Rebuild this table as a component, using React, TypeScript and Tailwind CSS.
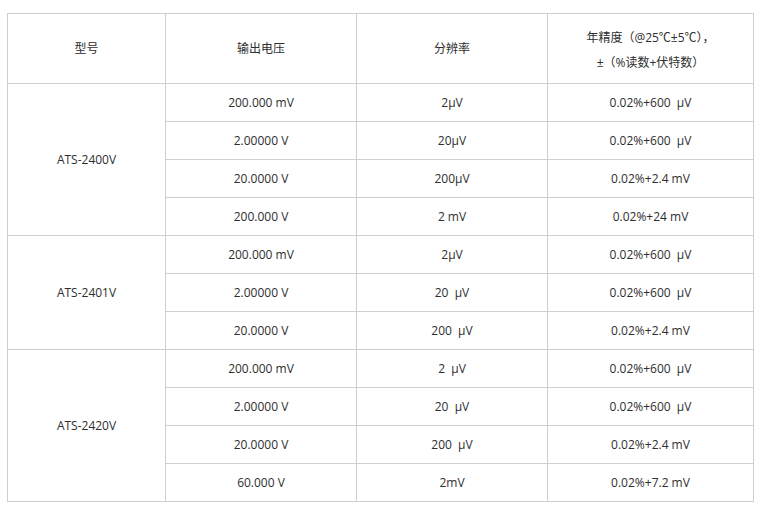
import React from "react";

type Row = { v: string; r: string; a: string };
const groups: { name: string; rows: Row[] }[] = [
  {
    name: "ATS-2400V",
    rows: [
      { v: "200.000 mV", r: "2μV", a: "0.02%+600  μV" },
      { v: "2.00000 V", r: "20μV", a: "0.02%+600  μV" },
      { v: "20.0000 V", r: "200μV", a: "0.02%+2.4 mV" },
      { v: "200.000 V", r: "2 mV", a: "0.02%+24 mV" },
    ],
  },
  {
    name: "ATS-2401V",
    rows: [
      { v: "200.000 mV", r: "2μV", a: "0.02%+600  μV" },
      { v: "2.00000 V", r: "20  μV", a: "0.02%+600  μV" },
      { v: "20.0000 V", r: "200  μV", a: "0.02%+2.4 mV" },
    ],
  },
  {
    name: "ATS-2420V",
    rows: [
      { v: "200.000 mV", r: "2  μV", a: "0.02%+600  μV" },
      { v: "2.00000 V", r: "20  μV", a: "0.02%+600  μV" },
      { v: "20.0000 V", r: "200  μV", a: "0.02%+2.4 mV" },
      { v: "60.000 V", r: "2mV", a: "0.02%+7.2 mV" },
    ],
  },
];

const cell = "border border-[#cfcfcf] text-center align-middle whitespace-pre p-0";

export default function App() {
  return (
    <div
      className="w-[760px] h-[510px] bg-white pl-[7px] pt-[13px] text-[12px] text-[#2e2e2e]"
      style={{ fontFamily: '"Open Sans", "Noto Sans CJK SC", sans-serif' }}
    >
      <table className="border-collapse table-fixed w-[746px]">
        <colgroup>
          <col className="w-[158px]" />
          <col className="w-[191px]" />
          <col className="w-[191px]" />
          <col className="w-[206px]" />
        </colgroup>
        <thead>
          <tr className="h-[70px]">
            <th className={`${cell} font-normal`}>型号</th>
            <th className={`${cell} font-normal`}>输出电压</th>
            <th className={`${cell} font-normal`}>分辨率</th>
            <th className={`${cell} font-normal leading-[25px] pt-[2px]`}>
              <div>年精度（@25℃±5℃），</div>
              <div>±（%读数+伏特数）</div>
            </th>
          </tr>
        </thead>
        <tbody>
          {groups.map((g) =>
            g.rows.map((row, i) => (
              <tr key={g.name + i} className="h-[38px]">
                {i === 0 && (
                  <td className={cell} rowSpan={g.rows.length}>
                    {g.name}
                  </td>
                )}
                <td className={cell}>{row.v}</td>
                <td className={cell}>{row.r}</td>
                <td className={cell}>{row.a}</td>
              </tr>
            ))
          )}
        </tbody>
      </table>
    </div>
  );
}
